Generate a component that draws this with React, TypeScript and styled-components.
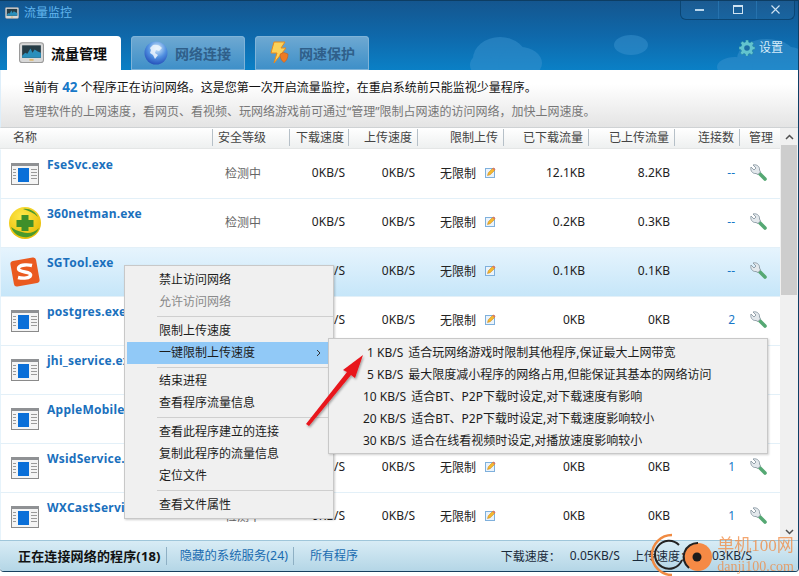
import React from "react";
import styled, { createGlobalStyle } from "styled-components";

const FONT = `"Noto Sans", "Noto Sans CJK SC", sans-serif`;

const Global = createGlobalStyle`
  html, body { margin: 0; padding: 0; background: #fff; }
  body { width: 799px; height: 576px; overflow: hidden; font-family: ${FONT}; font-size: 12px; }
`;

const Win = styled.div`
  position: relative;
  width: 798px;
  height: 571px;
  display: flex;
  flex-direction: column;
  background: #fff;
  border-right: 1px solid #0e3f66;
  border-bottom: 1px solid #16405f;
  border-radius: 0 0 4px 4px;
`;
const Head = styled.header`
  position: relative;
  height: 70px;
  flex: none;
  background: linear-gradient(#14568f 0%, #0f68aa 50%, #0a80c6 100%);
  border-top: 1px solid #0d3d63;
  box-sizing: border-box;
  overflow: hidden;
`;
const Clouds = styled.svg`
  position: absolute;
  inset: 0;
  width: 798px;
  height: 70px;
`;
const TitleRow = styled.div`
  position: relative;
  height: 35px;
  display: flex;
  align-items: flex-start;
  justify-content: space-between;
`;
const Title = styled.div`
  display: flex;
  align-items: center;
  gap: 5px;
  padding: 4px 0 0 5px;
  color: #62b6ee;
  font-size: 12px;
  line-height: 16px;
`;
const Controls = styled.div`
  display: flex;
  width: 113px;
  height: 19px;
  margin-right: 3px;
  margin-top: -1px;
  border: 1px solid #0b4674;
  border-top: none;
  border-radius: 0 0 6px 6px;
  background: rgba(255, 255, 255, 0.03);
`;
const Ctrl = styled.div<{ $sep?: boolean }>`
  flex: 1;
  display: flex;
  align-items: center;
  justify-content: center;
  border-left: ${(p) => (p.$sep ? "1px solid #2672ad" : "none")};
`;
const TabBar = styled.div`
  position: relative;
  height: 34px;
  display: flex;
  align-items: flex-end;
  gap: 10px;
  padding-left: 7px;
`;
const Tab = styled.div<{ $active?: boolean }>`
  width: 114px;
  height: 34px;
  box-sizing: border-box;
  display: flex;
  align-items: center;
  gap: 7px;
  padding-left: ${(p) => (p.$active ? 12 : 13)}px;
  border-radius: 4px 4px 0 0;
  font-size: 14px;
  font-weight: 700;
  color: ${(p) => (p.$active ? "#0c0c0c" : "#2f5f8a")};
  background: ${(p) => (p.$active ? "#fff" : "linear-gradient(#6fa9d2, #3d8fc8)")};
  box-shadow: ${(p) => (p.$active ? "none" : "inset 0 0 0 1px #7fb3d8")};
`;
const Setting = styled.div`
  position: absolute;
  right: 15px;
  top: 39px;
  display: flex;
  align-items: center;
  gap: 4px;
  color: #d5ecfa;
  font-size: 12px;
  line-height: 16px;
`;
const Info = styled.section`
  height: 58px;
  flex: none;
  box-sizing: border-box;
  padding: 9px 0 0 22px;
  background: linear-gradient(#fff 0%, #fff 25%, #e4e4e4 100%);
  border-bottom: 1px solid #cfd2d4;
  border-left: 1px solid #ddeefa;
`;
const InfoLine = styled.div`
  font-size: 12px;
  line-height: 17px;
  color: #111;
  white-space: pre;
`;
const InfoSub = styled(InfoLine)`
  color: #777;
  margin-top: 7px;
`;
const Count = styled.b`
  color: #1878c8;
  font-size: 13.5px;
`;
const Main = styled.div`
  flex: 1;
  display: flex;
  min-height: 0;
`;
const Table = styled.div`
  width: 780px;
  display: flex;
  flex-direction: column;
`;
const GRID = "213px 77px 59px 69px 86px 85px 86px 65px 40px";
const HeadRow = styled.div`
  height: 20px;
  flex: none;
  display: grid;
  grid-template-columns: ${GRID};
  background: linear-gradient(#fff, #eef0f0);
  border-bottom: 1px solid #e4e6e6;
  color: #444;
  font-size: 12px;
  line-height: 19px;
`;
const HeadCell = styled.div<{ $left?: boolean; $pad?: number; $nosep?: boolean }>`
  box-sizing: border-box;
  text-align: ${(p) => (p.$left ? "left" : "right")};
  padding: ${(p) => (p.$left ? `0 0 0 ${p.$pad ?? 4}px` : `0 ${p.$pad ?? 5}px 0 0`)};
  border-right: ${(p) => (p.$nosep ? "none" : "1px solid #b6c0c8")};
  white-space: nowrap;
  overflow: hidden;
  height: 17px;
  margin-top: 1px;
  line-height: 17px;
`;
const Rows = styled.div`
  flex: 1;
  min-height: 0;
  overflow: hidden;
`;
const Row = styled.div<{ $sel?: boolean }>`
  height: 49px;
  box-sizing: border-box;
  display: grid;
  grid-template-columns: ${GRID};
  align-items: center;
  padding-bottom: 3px;
  border-top: 1px solid #e3f0f8;
  border-left: 1px solid #e6f3fb;
  background: ${(p) => (p.$sel ? "linear-gradient(#e6f4fd, #c6e6f9)" : "#fff")};
  color: #222;
  font-size: 12px;
  &:first-child {
    border-top-color: #fff;
  }
`;
const NameCell = styled.div`
  display: flex;
  align-items: flex-start;
  gap: 6px;
  height: 100%;
  padding-left: 8px;
  min-width: 0;
  overflow: hidden;
`;
const IconBox = styled.div`
  width: 32px;
  height: 32px;
  flex: none;
  margin-top: 8px;
  display: flex;
  align-items: center;
  justify-content: center;
`;
const Name = styled.div`
  color: #1a70bd;
  font-weight: 700;
  font-size: 12px;
  letter-spacing: 0.25px;
  line-height: 16px;
  margin-top: 7px;
  white-space: nowrap;
`;
const Sec = styled.div`
  color: #666;
  padding-left: 11px;
`;
const Num = styled.div<{ $pad: number }>`
  text-align: right;
  padding-right: ${(p) => p.$pad}px;
  white-space: nowrap;
`;
const Limit = styled.div`
  display: flex;
  align-items: center;
  justify-content: flex-end;
  gap: 9px;
  padding-right: 9px;
`;
const Conn = styled.div`
  text-align: right;
  padding-right: 6px;
  color: #1878c8;
`;
const Manage = styled.div`
  display: flex;
  justify-content: center;
  padding-right: 5px;
`;
const Scroll = styled.div`
  width: 18px;
  flex: none;
  display: flex;
  flex-direction: column;
  background: #f0f0f0;
`;
const ScrollBtn = styled.div`
  height: 17px;
  display: flex;
  align-items: center;
  justify-content: center;
  flex: none;
`;
const ScrollTrack = styled.div`
  flex: 1;
  padding: 0 1px;
  display: flex;
`;
const ScrollThumb = styled.div`
  flex: 1;
  height: 150px;
  background: #cdcdcd;
`;
const Foot = styled.footer`
  height: 31px;
  flex: none;
  box-sizing: border-box;
  display: flex;
  align-items: center;
  padding-left: 18px;
  background: linear-gradient(#d8ecf5, #b4d6e6);
  border-top: 1px solid #9fc6da;
  border-radius: 0 0 4px 4px;
  font-size: 12px;
  position: relative;
`;
const FootTab = styled.div<{ $active?: boolean; $last?: boolean }>`
  color: ${(p) => (p.$active ? "#111" : "#1a6bb0")};
  font-weight: ${(p) => (p.$active ? 700 : 400)};
  font-size: ${(p) => (p.$active ? 13 : p.$last ? 12 : 12.4)}px;
  letter-spacing: ${(p) => (p.$active ? 0.15 : 0)}px;
  padding: 0 ${(p) => (p.$last ? 0 : 5)}px 0 ${(p) => (p.$active ? 0 : p.$last ? 16 : 13)}px;
  border-right: ${(p) => (p.$last ? "none" : "1px solid #8eb0c4")};
  line-height: 18px;
  white-space: nowrap;
`;
const FootSpeed = styled.div`
  margin-left: auto;
  display: flex;
  color: #1a2a3a;
  padding-right: 46px;
  white-space: nowrap;
`;
const FootVal = styled.span<{ $last?: boolean }>`
  margin: 0 ${(p) => (p.$last ? 0 : 12)}px 0 ${(p) => (p.$last ? 10 : 9)}px;
`;
const Menu = styled.div`
  position: absolute;
  box-sizing: border-box;
  left: 124px;
  top: 265px;
  width: 210px;
  height: 254px;
  padding: 3px 2px;
  background: #f0f0f0;
  border: 1px solid #c8c8c8;
  box-shadow: 1px 1px 2px rgba(0, 0, 0, 0.2);
  color: #1c1c1c;
  font-size: 12px;
`;
const MenuItem = styled.div<{ $on?: boolean; $off?: boolean }>`
  height: 22px;
  line-height: 22px;
  padding-left: 32px;
  position: relative;
  color: ${(p) => (p.$off ? "#8a8a8a" : "#1c1c1c")};
  background: ${(p) => (p.$on ? "#91c9f7" : "transparent")};
`;
const MenuArrow = styled.svg`
  position: absolute;
  right: 9px;
  top: 7px;
`;
const MenuSep = styled.div<{ $tight?: boolean }>`
  height: 1px;
  background: #cfcfcf;
  margin: 3px 0 ${(p) => (p.$tight ? 2 : 3)}px 30px;
  width: 176px;
`;
const SubMenu = styled.div`
  position: absolute;
  box-sizing: border-box;
  left: 328px;
  top: 338px;
  width: 440px;
  height: 116px;
  padding: 3px 2px;
  background: #f0f0f0;
  border: 1px solid #c8c8c8;
  box-shadow: 1px 1px 2px rgba(0, 0, 0, 0.18);
  color: #1c1c1c;
  font-size: 12px;
`;
const SubItem = styled.div<{ $indent: number }>`
  height: 22px;
  line-height: 22px;
  display: flex;
  gap: 5px;
  padding-left: ${(p) => p.$indent}px;
  white-space: pre;
`;
const Overlay = styled.svg`
  position: absolute;
  left: 0;
  top: 0;
  pointer-events: none;
`;
const Mark = styled.div`
  position: absolute;
  left: 712px;
  top: 536px;
  color: #f08a42;
  opacity: 0.75;
  white-space: nowrap;
  text-align: center;
  width: 87px;
`;
const MarkTop = styled.div`
  font-size: 17px;
  line-height: 20px;
  font-family: "Liberation Serif", "Noto Sans CJK SC", serif;
`;
const MarkBot = styled.div`
  font-size: 14px;
  line-height: 16px;
  margin-top: 3px;
  font-family: "Liberation Serif", serif;
`;

const ExeIcon = () => (
  <svg width="28" height="22" viewBox="0 0 28 22">
    <rect x="0.500" y="0.500" width="27" height="21" fill="#f4f4f4" stroke="#8a8a8a" />
    <rect x="0" y="0" width="28" height="3" fill="#8f9194" />
    <rect x="7" y="5" width="11" height="14" fill="#0a6fd8" />
    <path d="M2 6.500h3M2 9.500h3M2 12.500h3M2 15.500h3M20 6.500h6M20 9.500h6M20 12.500h6M20 15.500h6" stroke="#9a9a9a" />
  </svg>
);
const Net360 = () => (
  <svg width="32" height="32" viewBox="0 0 32 32">
    <defs>
      <radialGradient id="y360" cx="0.4" cy="0.3" r="0.8">
        <stop offset="0" stopColor="#ffe94a" />
        <stop offset="1" stopColor="#e6b800" />
      </radialGradient>
    </defs>
    <circle cx="16" cy="16" r="16" fill="url(#y360)" />
    <path d="M2 20c3 8 10 11 17 10 5-1 9-4 11-9-5 5-11 6-17 4-5-1-8-3-11-5z" fill="#4a9a2c" />
    <path d="M14 2c6-1 12 2 15 8-4-4-9-6-15-8z" fill="#4a9a2c" />
    <path d="M12.500 8h7v5h5v7h-5v4h-7v-4h-5v-7h5z" fill="#3f8f2a" />
  </svg>
);
const Sogou = () => (
  <svg width="32" height="32" viewBox="0 0 32 32">
    <rect x="3" y="3" width="26" height="26" rx="3" fill="#ea5a20" transform="rotate(-10 16 16)" />
    <path d="M23 9.500c-4-1-11-1-13 1.500-2 3 2 4.500 6 5 4 .5 7 2 5 4.500-2 2-8 2-12 1" fill="none" stroke="#fff" strokeWidth="3.400" />
  </svg>
);
const Pencil = () => (
  <svg width="11" height="11" viewBox="0 0 11 11">
    <rect x="0.500" y="1.500" width="9" height="9" fill="#eaf3fb" stroke="#7fb0dc" />
    <path d="M2.500 8.500l.8-2.700L7.500 1.500l2 2L5.200 7.700z" fill="#f5b92e" stroke="#c07c16" strokeWidth="0.500" />
    <path d="M7.500 1.500l1-1 2 2-1 1z" fill="#e8745a" />
  </svg>
);
const Wrench = () => (
  <svg width="17" height="17" viewBox="0 0 17 17">
    <path d="M9 9l6 6" stroke="#55a873" strokeWidth="3.600" strokeLinecap="round" />
    <path d="M3 1L6 4 4 6 1 3C0 6.500 2.500 10 6 9.500L8 10.500 10.500 8 9.500 6C10 2.500 6.500 0 3 1z" fill="#e3e8ec" stroke="#8a99a3" strokeWidth="0.900" />
  </svg>
);
const MonitorIcon = ({ w = 24 }: { w?: number }) => (
  <svg width={w} height={w * 0.85} viewBox="0 0 24 20">
    <rect x="0.500" y="0.500" width="23" height="19" rx="2.500" fill="#d8d8d8" stroke="#9a9a9a" />
    <rect x="3" y="3" width="18" height="12" fill="#263c46" />
    <path d="M3 13l3-3 2 1 3-5 2 4 2-3 3 2 3 1v5H3z" fill="#2a8fbb" />
    <rect x="10" y="16.500" width="4" height="1" fill="#e0a020" />
  </svg>
);
const Globe = () => (
  <svg width="24" height="24" viewBox="0 0 24 24">
    <defs>
      <radialGradient id="gl" cx="0.55" cy="0.3" r="0.8">
        <stop offset="0" stopColor="#d8eefc" />
        <stop offset="0.5" stopColor="#4f8fe0" />
        <stop offset="1" stopColor="#1a3fb0" />
      </radialGradient>
    </defs>
    <circle cx="12" cy="12" r="11.500" fill="url(#gl)" />
    <path d="M9 4c3-1 7 0 9 3l-3 3-3-1-1 3 3 2-3 4-2-4-3-2 1-3-1-2z" fill="#eef6fd" opacity="0.85" />
  </svg>
);
const Bolt = () => (
  <svg width="24" height="24" viewBox="0 0 24 24">
    <path d="M6 1h11l-4 6h5L6 22l3-10H3z" fill="#fbd25a" stroke="#e88a1c" />
    <path d="M12 13l4-1.500 4 1.500c0 4-1.500 7-4 8.500-2.500-1.500-4-4.500-4-8.500z" fill="#ee7a24" stroke="#c85a10" strokeWidth="0.500" />
  </svg>
);
const Gear = () => (
  <svg width="16" height="16" viewBox="0 0 16 16">
    <path d="M6.700 0h2.600l.4 2.200 1.300.6 1.900-1.200 1.800 1.800-1.200 1.900.6 1.300L16 6.700v2.600l-2.200.4-.6 1.300 1.200 1.900-1.800 1.800-1.900-1.200-1.300.6-.4 2.200H6.700l-.4-2.200-1.300-.6-1.900 1.200-1.800-1.800 1.200-1.900-.6-1.300L0 9.300V6.700l2.200-.4.600-1.300L1.600 3.100l1.800-1.800 1.900 1.200 1.300-.6z" fill="#63c4cf" stroke="#1f7f96" strokeWidth="0.500" />
    <circle cx="8" cy="8" r="2.800" fill="#1d6fa5" />
  </svg>
);

type R = { name: string; icon: React.ReactNode; sec: string; dl: string; ul: string; lim: string; d: string; u: string; c: string; sel?: boolean };
const rows: R[] = [
  { name: "FseSvc.exe", icon: <ExeIcon />, sec: "检测中", dl: "0KB/S", ul: "0KB/S", lim: "无限制", d: "12.1KB", u: "8.2KB", c: "--" },
  { name: "360netman.exe", icon: <Net360 />, sec: "检测中", dl: "0KB/S", ul: "0KB/S", lim: "无限制", d: "0.2KB", u: "0.3KB", c: "--" },
  { name: "SGTool.exe", icon: <Sogou />, sec: "检测中", dl: "0KB/S", ul: "0KB/S", lim: "无限制", d: "0.1KB", u: "0.1KB", c: "--", sel: true },
  { name: "postgres.exe", icon: <ExeIcon />, sec: "检测中", dl: "0KB/S", ul: "0KB/S", lim: "无限制", d: "0KB", u: "0KB", c: "2" },
  { name: "jhi_service.exe", icon: <ExeIcon />, sec: "检测中", dl: "0KB/S", ul: "0KB/S", lim: "无限制", d: "0KB", u: "0KB", c: "1" },
  { name: "AppleMobileDevice.exe", icon: <ExeIcon />, sec: "检测中", dl: "0KB/S", ul: "0KB/S", lim: "无限制", d: "0KB", u: "0KB", c: "1" },
  { name: "WsidService.exe", icon: <ExeIcon />, sec: "检测中", dl: "0KB/S", ul: "0KB/S", lim: "无限制", d: "0KB", u: "0KB", c: "1" },
  { name: "WXCastService.exe", icon: <ExeIcon />, sec: "检测中", dl: "0KB/S", ul: "0KB/S", lim: "无限制", d: "0KB", u: "0KB", c: "1" },
];

const heads = ["下载速度", "上传速度", "限制上传", "已下载流量", "已上传流量", "连接数"];

const subs: [string, string, number][] = [
  ["1 KB/S", "适合玩网络游戏时限制其他程序,保证最大上网带宽", 36],
  ["5 KB/S", "最大限度减小程序的网络占用,但能保证其基本的网络访问", 36],
  ["10 KB/S", "适合BT、P2P下载时设定,对下载速度有影响", 32],
  ["20 KB/S", "适合BT、P2P下载时设定,对下载速度影响较小", 32],
  ["30 KB/S", "适合在线看视频时设定,对播放速度影响较小", 32],
];

export default function App() {
  return (
    <>
      <Global />
      <Win>
        <Head>
          <Clouds viewBox="0 0 798 70">
            <g fill="#3a93cf" opacity="0.5">
              <ellipse cx="500" cy="58" rx="27" ry="22" />
              <ellipse cx="520" cy="62" rx="22" ry="16" />
              <ellipse cx="482" cy="64" rx="12" ry="11" />
              <ellipse cx="631" cy="44" rx="17" ry="10" />
              <ellipse cx="767" cy="58" rx="30" ry="20" />
              <ellipse cx="735" cy="66" rx="18" ry="10" />
              <ellipse cx="790" cy="60" rx="16" ry="14" />
            </g>
          </Clouds>
          <TitleRow>
            <Title>
              <MonitorIcon w={14} />
              流量监控
            </Title>
            <Controls>
              <Ctrl>
                <svg width="9" height="2"><rect width="9" height="2" fill="#b9d6ec" /></svg>
              </Ctrl>
              <Ctrl $sep>
                <svg width="10" height="9"><rect x="0.500" y="0.500" width="9" height="8" fill="none" stroke="#cfe3f2" /><rect width="10" height="2" fill="#cfe3f2" /></svg>
              </Ctrl>
              <Ctrl $sep>
                <svg width="9" height="9"><path d="M.5.5l8 8M8.500.5l-8 8" stroke="#cfe3f2" strokeWidth="1.100" /></svg>
              </Ctrl>
            </Controls>
          </TitleRow>
          <TabBar>
            <Tab $active><MonitorIcon w={25} />流量管理</Tab>
            <Tab><Globe />网络连接</Tab>
            <Tab><Bolt />网速保护</Tab>
          </TabBar>
          <Setting><Gear />设置</Setting>
        </Head>
        <Info>
          <InfoLine>当前有 <Count>42</Count> 个程序正在访问网络。这是您第一次开启流量监控，在重启系统前只能监视少量程序。</InfoLine>
          <InfoSub>管理软件的上网速度，看网页、看视频、玩网络游戏前可通过“管理”限制占网速的访问网络，加快上网速度。</InfoSub>
        </Info>
        <Main>
          <Table>
            <HeadRow>
              <HeadCell $left $pad={13}>名称</HeadCell>
              <HeadCell $left $pad={5}>安全等级</HeadCell>
              {heads.map((h) => (
                <HeadCell key={h} $pad={h === "下载速度" ? 4 : undefined}>{h}</HeadCell>
              ))}
              <HeadCell $pad={7} $nosep>管理</HeadCell>
            </HeadRow>
            <Rows>
              {rows.map((r) => (
                <Row key={r.name} $sel={r.sel}>
                  <NameCell>
                    <IconBox>{r.icon}</IconBox>
                    <Name>{r.name}</Name>
                  </NameCell>
                  <Sec>{r.sec}</Sec>
                  <Num $pad={5}>{r.dl}</Num>
                  <Num $pad={4}>{r.ul}</Num>
                  <Limit>{r.lim}<Pencil /></Limit>
                  <Num $pad={5}>{r.d}</Num>
                  <Num $pad={6}>{r.u}</Num>
                  <Conn>{r.c}</Conn>
                  <Manage><Wrench /></Manage>
                </Row>
              ))}
            </Rows>
          </Table>
          <Scroll>
            <ScrollBtn>
              <svg width="9" height="6"><path d="M1 5l3.500-3.500L8 5" fill="none" stroke="#505050" strokeWidth="1.500" /></svg>
            </ScrollBtn>
            <ScrollTrack><ScrollThumb /></ScrollTrack>
            <ScrollBtn>
              <svg width="9" height="6"><path d="M1 1l3.500 3.500L8 1" fill="none" stroke="#505050" strokeWidth="1.500" /></svg>
            </ScrollBtn>
          </Scroll>
        </Main>
        <Foot>
          <FootTab $active>正在连接网络的程序(18)</FootTab>
          <FootTab>隐藏的系统服务(24)</FootTab>
          <FootTab $last>所有程序</FootTab>
          <FootSpeed>下载速度：<FootVal>0.05KB/S</FootVal>上传速度：<FootVal $last>0.03KB/S</FootVal></FootSpeed>
        </Foot>
        <Menu>
          <MenuItem>禁止访问网络</MenuItem>
          <MenuItem $off>允许访问网络</MenuItem>
          <MenuSep />
          <MenuItem>限制上传速度</MenuItem>
          <MenuItem $on>一键限制上传速度
            <MenuArrow width="6" height="8"><path d="M1 1l3 3-3 3" fill="none" stroke="#333" /></MenuArrow>
          </MenuItem>
          <MenuSep $tight />
          <MenuItem>结束进程</MenuItem>
          <MenuItem>查看程序流量信息</MenuItem>
          <MenuSep />
          <MenuItem>查看此程序建立的连接</MenuItem>
          <MenuItem>复制此程序的流量信息</MenuItem>
          <MenuItem>定位文件</MenuItem>
          <MenuSep />
          <MenuItem>查看文件属性</MenuItem>
        </Menu>
        <SubMenu>
          {subs.map(([a, b, indent]) => (
            <SubItem key={a} $indent={indent}><span>{a}</span><span>{b}</span></SubItem>
          ))}
        </SubMenu>
        <Overlay width="799" height="576" viewBox="0 0 799 576">
          <defs>
            <filter id="sh" x="-20%" y="-20%" width="140%" height="140%">
              <feDropShadow dx="1" dy="1.500" stdDeviation="1" floodColor="#000" floodOpacity="0.35" />
            </filter>
          </defs>
          <path d="M306 424L347 372 343 370 363 355 355 378 351 375 309 426z" fill="#e8141c" filter="url(#sh)" />
          <path d="M672 535A20 20 0 0 0 672 575" fill="none" stroke="#f08a42" strokeWidth="2.500" />
          <path d="M679 545A14 14 0 1 0 682 560" fill="none" stroke="#222" strokeWidth="2" />
          <circle cx="698" cy="557" r="14" fill="#f58a45" />
          <path d="M698 543A14 14 0 0 0 689 568" fill="none" stroke="#222" strokeWidth="2" />
          <circle cx="697" cy="557" r="4.500" fill="#1c1c1c" />
        </Overlay>
        <Mark>
          <MarkTop>单机100网</MarkTop>
          <MarkBot>danji100.com</MarkBot>
        </Mark>
      </Win>
    </>
  );
}
